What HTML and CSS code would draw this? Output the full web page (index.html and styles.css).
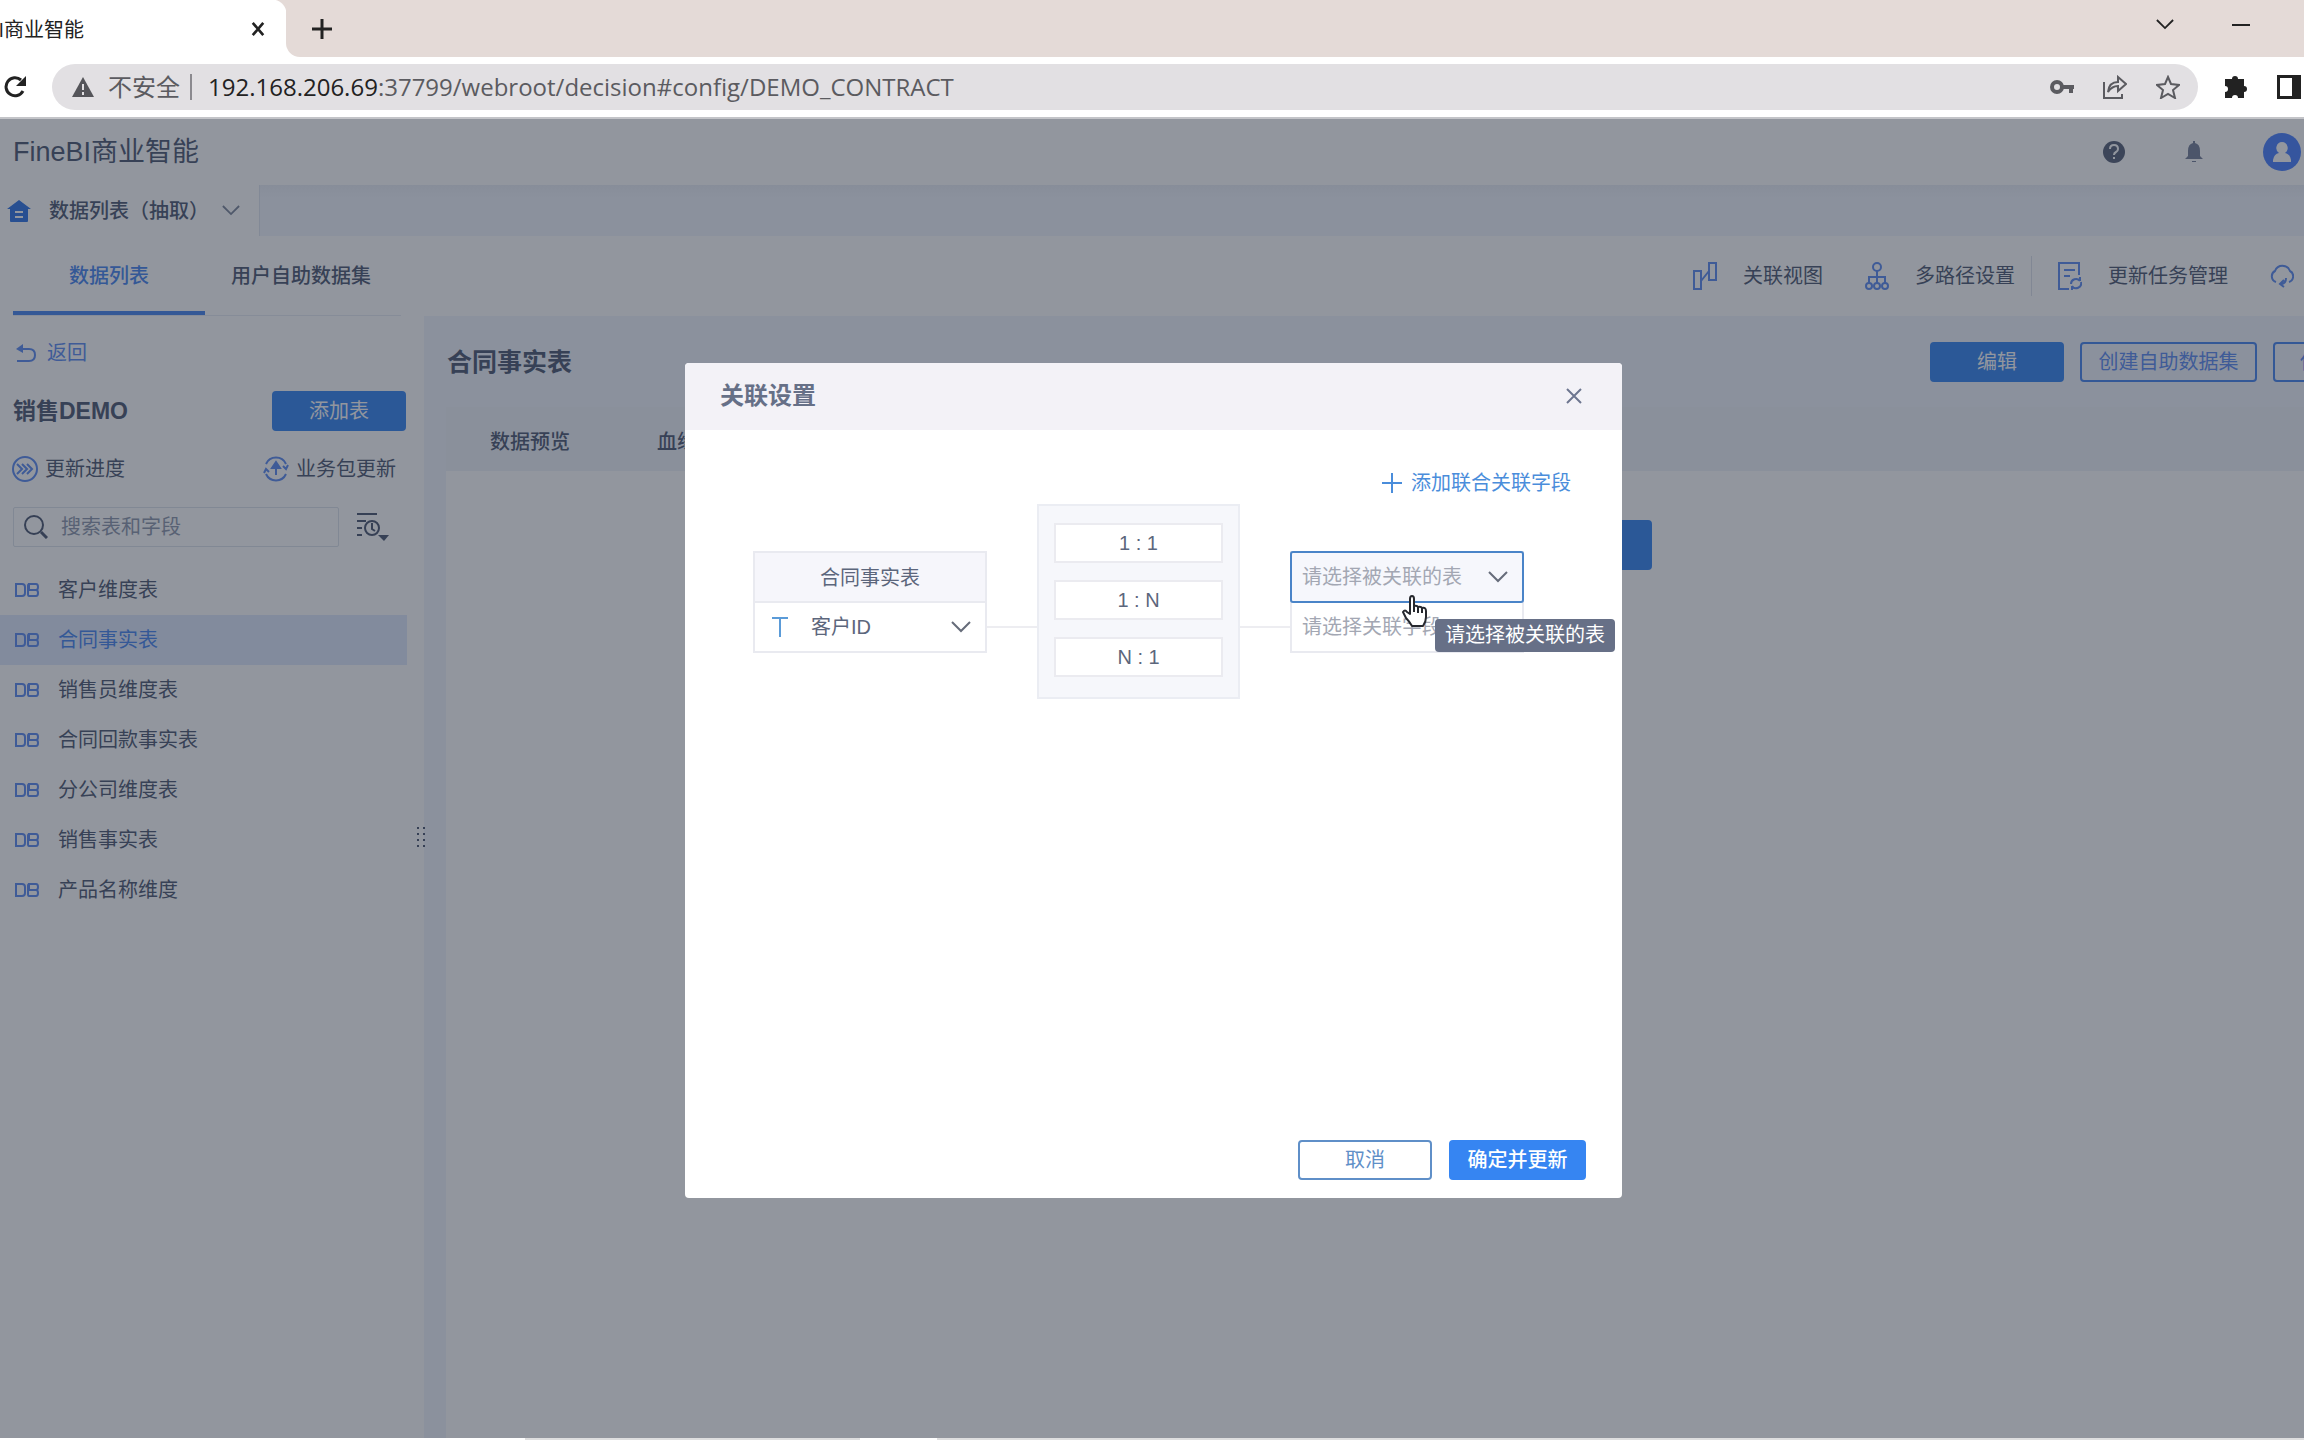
FILE: index.html
```html
<!DOCTYPE html>
<html lang="zh-CN">
<head>
<meta charset="utf-8">
<title>FineBI商业智能</title>
<link rel="stylesheet" href="styles.css">
</head>
<body>
<svg class="defs" width="0" height="0" aria-hidden="true">
  <symbol id="db" viewBox="0 0 24 14"><path d="M1 1h6q3 0 3 3v6q0 3-3 3H1zM14 1h7q2 0 2 3t-2 3h-7zM14 7h7q2 0 2 3t-2 3h-7q-1 0-1-2V3q0-2 1-2" fill="none" stroke="currentColor" stroke-width="2"/></symbol>
  <symbol id="chev" viewBox="0 0 20 12"><path d="M1 1l9 9 9-9" fill="none" stroke="currentColor" stroke-width="2"/></symbol>
  <symbol id="cross" viewBox="0 0 16 16"><path d="M1 1l14 14M15 1L1 15" fill="none" stroke="currentColor" stroke-width="2"/></symbol>
  <symbol id="plus" viewBox="0 0 20 20"><path d="M10 0v20M0 10h20" fill="none" stroke="currentColor" stroke-width="2"/></symbol>
</svg>

<header class="chrome">
  <div class="tabstrip">
    <div class="browser-tab">
      <div class="tab-title"><span>FineBI商业智能</span></div>
      <button class="icon-btn tab-close" aria-label="关闭标签页"><svg width="14" height="14" viewBox="0 0 16 16"><path d="M2 1l12 14M14 1L2 15" fill="none" stroke="currentColor" stroke-width="3"/></svg></button>
    </div>
    <div class="strip-rest">
      <button class="icon-btn" aria-label="新标签页"><svg width="20" height="20" viewBox="0 0 20 20"><path d="M10 0v20M0 10h20" fill="none" stroke="currentColor" stroke-width="3"/></svg></button>
      <div class="window-controls">
        <button class="icon-btn" aria-label="搜索标签页"><svg width="18" height="11"><use href="#chev"/></svg></button>
        <button class="icon-btn" aria-label="最小化"><svg width="18" height="10" viewBox="0 0 18 10"><path d="M0 5h18" stroke="currentColor" stroke-width="2"/></svg></button>
      </div>
    </div>
  </div>
  <div class="toolbar">
    <button class="icon-btn" aria-label="重新加载"><svg width="24" height="24" viewBox="0 0 24 24"><path d="M19 16a9 9 0 1 1-2-11" fill="none" stroke="currentColor" stroke-width="3"/><path d="M22 1v10h-10z" fill="currentColor"/></svg></button>
    <div class="omnibox">
      <svg width="22" height="20" viewBox="0 0 22 20"><path d="M11 0L22 20H0z" fill="#55555a"/><path d="M11 7v6M11 15v3" stroke="#e2e0e3" stroke-width="2"/></svg>
      <span class="insecure">不安全</span>
      <span class="omni-sep"></span>
      <span class="url"><b>192.168.206.69</b>:37799/webroot/decision#config/DEMO_CONTRACT</span>
      <div class="omni-icons">
        <svg width="24" height="24" viewBox="0 0 24 24"><circle cx="7" cy="12" r="5" fill="none" stroke="currentColor" stroke-width="4"/><path d="M12 10h12v4h-1v4h-4v-4h-7z" fill="currentColor"/></svg>
        <svg width="24" height="24" viewBox="0 0 24 24" fill="none" stroke="currentColor" stroke-width="2"><path d="M1 7v16h18v-4"/><path d="M5 17Q6 7 15 7V2l8 7-8 7v-5Q9 11 5 17z"/></svg>
        <svg width="24" height="24" viewBox="0 0 24 24"><path d="M12 2l3 7 8 1-6 5 2 8-7-4-7 4 2-8-6-5 8-1z" fill="none" stroke="currentColor" stroke-width="2"/></svg>
      </div>
    </div>
    <div class="ext-icons">
      <svg width="24" height="24" viewBox="0 0 24 24"><path d="M1 4h7a3 3 0 1 1 6 0h6v7a3 3 0 1 1 0 6v6h-6a3 3 0 1 0-6 0H1v-6a3 3 0 1 0 0-6z" fill="currentColor"/></svg>
      <svg width="24" height="24" viewBox="0 0 24 24"><path d="M0 0h24v24H0zM3 3v18h12V3z" fill="currentColor" fill-rule="evenodd"/></svg>
    </div>
  </div>
</header>

<div class="app">
  <header class="app-head">
    <div class="brand">FineBI商业智能</div>
    <div class="head-icons">
      <svg width="22" height="22" viewBox="0 0 22 22"><circle cx="11" cy="11" r="11" fill="#576178"/><path d="M7 8q0-4 4-4t4 4q0 2-2 3t-2 3M11 16v2" fill="none" stroke="#fff" stroke-width="2"/></svg>
      <svg width="18" height="22" viewBox="0 0 18 22"><path d="M8 0h2v2q5 1 5 8v5l3 3H0l3-3v-5q0-7 5-8zM7 20h4v1H7z" fill="#76809a"/></svg>
      <svg width="38" height="38" viewBox="0 0 38 38"><circle cx="19" cy="19" r="19" fill="#4a80ff"/><path d="M19 9a6 6 0 0 1 3 11q5 1 6 7v2H10v-2q1-6 6-7a6 6 0 0 1 3-11z" fill="#fff"/></svg>
    </div>
  </header>

  <div class="page-tabs">
    <div class="page-tab">
      <svg width="24" height="22" viewBox="0 0 24 22"><path d="M12 0l12 9h-3v12q0 1-1 1H4q-1 0-1-1V9H0zM8 11v2h8v-2zM8 16v2h8v-2z" fill="#2f74e6" fill-rule="evenodd"/></svg>
      <span>数据列表（抽取）</span>
      <svg class="muted" width="18" height="11"><use href="#chev"/></svg>
    </div>
  </div>

  <nav class="section-nav">
    <div class="section-tabs">
      <a class="section-tab active" href="#list">数据列表</a>
      <a class="section-tab" href="#self">用户自助数据集</a>
    </div>
    <div class="nav-tools">
      <a class="tool" href="#view"><svg width="24" height="28" viewBox="0 0 24 28"><path d="M1 9h7v18H1zM16 1h7v17h-7zM8 19l8-10"/></svg>关联视图</a>
      <a class="tool" href="#path"><svg width="24" height="28" viewBox="0 0 24 28"><circle cx="12" cy="5" r="4"/><circle cx="4" cy="24" r="3"/><circle cx="12" cy="24" r="3"/><circle cx="20" cy="24" r="3"/><path d="M12 9v12M4 21v-6h16v6"/></svg>多路径设置</a>
      <a class="tool divided" href="#task"><svg width="24" height="28" viewBox="0 0 24 28"><path d="M11 27H1V1h20v12M6 8h11M6 14h6"/><path d="M13 22a5 5 0 0 1 9-3M23 20a5 5 0 0 1-9 4M22 15v4M14 28v-4"/></svg>更新任务管理</a>
      <a class="tool" href="#cloud" aria-label="云更新"><svg width="24" height="28" viewBox="0 0 24 28"><path d="M6 20a6 6 0 0 1-1-11 8 8 0 0 1 15 0 6 6 0 0 1-1 11M11 22q5 0 5-6M14 18l-4 4 4 3"/></svg></a>
    </div>
  </nav>

  <div class="workspace">
    <aside class="sidebar">
      <a class="back" href="#back"><svg width="20" height="18" viewBox="0 0 20 18"><path d="M5 5h8q6 0 6 6t-6 6H1" fill="none" stroke="currentColor" stroke-width="2"/><path d="M0 5l7-5v9z" fill="currentColor"/></svg>返回</a>
      <div class="pack-row">
        <h2>销售DEMO</h2>
        <button class="btn primary">添加表</button>
      </div>
      <div class="update-row">
        <a href="#progress"><svg width="26" height="26" viewBox="0 0 26 26"><circle cx="13" cy="13" r="12"/><path d="M5 8l5 5-5 5M10 8l5 5-5 5M15 8l5 5-5 5"/></svg>更新进度</a>
        <a href="#pack"><svg width="26" height="26" viewBox="0 0 26 26"><path d="M3 8A11 11 0 0 1 23 8M23 18A11 11 0 0 1 3 18M1 17l2-4 3 3M25 9l-2 4-3-3"/><path d="M13 19V9"/><path class="solid" d="M13 6l4 6H9z"/></svg>业务包更新</a>
      </div>
      <div class="search-row">
        <label class="search"><svg width="24" height="24" viewBox="0 0 24 24"><path d="M17 17l6 6" stroke="#4b5771" stroke-width="3"/><circle cx="10" cy="10" r="9" fill="none" stroke="#4b5771" stroke-width="2"/></svg><input type="text" placeholder="搜索表和字段" aria-label="搜索表和字段"></label>
        <button class="icon-btn sort" aria-label="排序"><svg width="34" height="30" viewBox="0 0 34 30" fill="none" stroke="currentColor" stroke-width="2"><path d="M1 2h20M1 9h9M1 16h5M1 23h5"/><circle cx="16" cy="16" r="7"/><path d="M16 11v6l3 2"/><path d="M22 23h11l-5 6z" fill="currentColor" stroke="none"/></svg></button>
      </div>
      <ul class="table-list">
        <li><a href="#t1"><svg width="24" height="14"><use href="#db"/></svg>客户维度表</a></li>
        <li><a class="selected" href="#t2"><svg width="24" height="14"><use href="#db"/></svg>合同事实表</a></li>
        <li><a href="#t3"><svg width="24" height="14"><use href="#db"/></svg>销售员维度表</a></li>
        <li><a href="#t4"><svg width="24" height="14"><use href="#db"/></svg>合同回款事实表</a></li>
        <li><a href="#t5"><svg width="24" height="14"><use href="#db"/></svg>分公司维度表</a></li>
        <li><a href="#t6"><svg width="24" height="14"><use href="#db"/></svg>销售事实表</a></li>
        <li><a href="#t7"><svg width="24" height="14"><use href="#db"/></svg>产品名称维度</a></li>
      </ul>
      <svg class="grip" width="8" height="22" viewBox="0 0 8 22"><path d="M1 1v20M7 1v20" stroke="#4b5771" stroke-width="2" stroke-dasharray="2 4"/></svg>
    </aside>

    <main class="content">
      <div class="content-head">
        <h1>合同事实表</h1>
        <div class="actions">
          <button class="btn primary">编辑</button>
          <button class="btn outline">创建自助数据集</button>
          <button class="btn outline">使用组件</button>
        </div>
      </div>
      <div class="panel">
        <div class="panel-tabs"><a href="#preview">数据预览</a><a href="#blood">血缘分析</a></div>
        <div class="panel-body"><button class="btn primary large">添加关联表</button></div>
      </div>
    </main>
  </div>

  <div class="backdrop">
    <section class="modal" role="dialog" aria-labelledby="dlg-title">
      <header class="modal-head">
        <h2 id="dlg-title">关联设置</h2>
        <button class="icon-btn" aria-label="关闭"><svg width="16" height="16"><use href="#cross"/></svg></button>
      </header>
      <div class="modal-body">
        <button class="add-field"><svg width="20" height="20"><use href="#plus"/></svg>添加联合关联字段</button>
        <div class="relation">
          <div class="pair">
            <div class="pair-head">合同事实表</div>
            <div class="field typed">
              <svg class="type" width="16" height="20" viewBox="0 0 16 20"><path d="M0 1h16M8 1v19" fill="none" stroke="#5b9bd8" stroke-width="2"/></svg>
              <select aria-label="关联字段"><option>客户ID</option></select>
              <svg class="arrow" width="20" height="12"><use href="#chev"/></svg>
            </div>
          </div>
          <span class="link-line"></span>
          <div class="kinds">
            <button>1 : 1</button>
            <button>1 : N</button>
            <button>N : 1</button>
          </div>
          <span class="link-line"></span>
          <div class="pair">
            <div class="field focused">
              <select aria-label="被关联的表"><option>请选择被关联的表</option></select>
              <svg class="arrow" width="20" height="12"><use href="#chev"/></svg>
            </div>
            <div class="field">
              <select aria-label="被关联字段"><option>请选择关联字段</option></select>
            </div>
            <div class="tooltip" role="tooltip">请选择被关联的表</div>
            <svg class="cursor" width="26" height="34" viewBox="0 0 26 34"><path d="M8 19V4q0-3 2-3t2 3v7q3-1 4 1 3-1 4 1 4-1 4 3v6q0 5-3 9H10q-3-5-6-8l-3-6q2-3 4 0z" fill="#fff" stroke="#26282e" stroke-width="2" stroke-linejoin="round"/><path d="M12 10v7M16 12v6M20 13v5" stroke="#26282e" stroke-width="2"/></svg>
          </div>
        </div>
      </div>
      <footer class="modal-foot">
        <button class="btn outline">取消</button>
        <button class="btn primary">确定并更新</button>
      </footer>
    </section>
  </div>
</div>

<footer class="taskbar"><span class="task-a"></span><span class="task-b"></span><span class="task-c"></span></footer>
</body>
</html>
```
FILE: styles.css
```css
* { box-sizing: border-box; }

body {
  margin: 0;
  min-height: 100vh;
  display: flex;
  flex-direction: column;
  overflow: hidden;
  background: #fff;
  color: #4e5972;
  font: 20px/28px "Liberation Sans", "Noto Sans CJK SC", sans-serif;
}

.defs { position: absolute; }
svg { flex: none; display: block; }
a { color: inherit; text-decoration: none; }
h1, h2 { margin: 0; }
button, input, select { font: inherit; color: inherit; }
button { white-space: nowrap; }

.icon-btn {
  display: flex;
  padding: 0;
  border: 0;
  background: none;
}

/* Browser frame */
.chrome { color: #222; font-family: "Open Sans", "Noto Sans CJK SC", sans-serif; }
.tabstrip { display: flex; height: 57px; background: #fff; }
.browser-tab {
  width: 286px;
  display: flex;
  align-items: center;
  background: radial-gradient(circle at 0 100%, #fff 14px, #e4dad7 15px) top right / 14px 14px no-repeat #fff;
}
.tab-title { width: 84px; display: flex; justify-content: flex-end; overflow: hidden; padding-top: 2px; white-space: nowrap; }
.tab-close { margin-left: 167px; }
.strip-rest {
  flex: 1;
  display: flex;
  align-items: center;
  justify-content: space-between;
  padding: 0 54px 0 26px;
  border-bottom-left-radius: 14px;
  background: #e4dad7;
}
.window-controls { display: flex; align-items: center; gap: 58px; padding-bottom: 8px; }
.toolbar { display: flex; align-items: center; height: 62px; padding: 0 3px 1px 4px; border-bottom: 2px solid #c3c4c8; }
.omnibox {
  flex: 1;
  display: flex;
  align-items: center;
  height: 46px;
  margin-left: 24px;
  padding: 0 18px 0 20px;
  border-radius: 23px;
  background: #e2e0e3;
  color: #5b5b60;
}
.insecure { margin-left: 14px; font-size: 24px; }
.omni-sep { width: 2px; height: 26px; margin: 0 16px 0 10px; background: #8b8a8f; }
.url { font-size: 24px; }
.url b { font-weight: 400; color: #222; }
.omni-icons { display: flex; gap: 29px; margin-left: auto; }
.ext-icons { display: flex; gap: 29px; margin-left: 26px; }

/* Application */
.app { position: relative; flex: 1; display: flex; flex-direction: column; }
.app-head { display: flex; align-items: center; justify-content: space-between; height: 66px; padding: 0 3px 0 13px; }
.brand { font-size: 27px; }
.head-icons { display: flex; align-items: center; gap: 60px; }
.page-tabs { height: 51px; background: linear-gradient(#eaeef6, #f1f5fd 12px); }
.page-tab {
  display: flex;
  align-items: center;
  width: 260px;
  height: 51px;
  padding-left: 7px;
  border-right: 1px solid #dfe5ef;
  background: #fff;
  font-weight: 500;
}
.page-tab span { width: 173px; margin-left: 18px; white-space: nowrap; }
.muted { color: #7c869a; }

.section-nav { display: flex; justify-content: space-between; height: 80px; }
.section-tabs { display: flex; margin-left: 13px; width: 388px; border-bottom: 1px solid #e8ecf4; font-weight: 500; }
.section-tab { display: flex; align-items: center; justify-content: center; width: 192px; padding-top: 4px; border-bottom: 4px solid transparent; }
.section-tab.active { color: #4886f0; border-color: #4886f0; }
.nav-tools { display: flex; align-items: center; gap: 42px; padding-right: 10px; }
.tool { display: flex; align-items: center; gap: 26px; height: 40px; white-space: nowrap; }
.tool svg, .update-row svg { fill: none; stroke: #5c8cf2; stroke-width: 2; }
.update-row .solid { fill: #5c8cf2; }
.tool.divided { padding-left: 26px; margin-left: -26px; border-left: 1px solid #dde2ec; }

.workspace { flex: 1; display: flex; }
.sidebar { position: relative; width: 424px; padding-top: 23px; }
.back { display: flex; align-items: center; gap: 11px; margin-left: 16px; color: #5c8cf2; }
.pack-row { display: flex; align-items: center; justify-content: space-between; margin: 24px 18px 0 13px; }
.pack-row h2 { font-size: 23px; }

.btn { height: 40px; border: 2px solid #4886f0; border-radius: 4px; padding: 0; min-width: 134px; }
.btn.primary { background: #3685f2; border-color: #3685f2; color: #fff; }
.btn.outline { background: #fff; color: #5c8cf2; }
.btn.large { height: 50px; padding: 0 28px; }

.update-row { display: flex; justify-content: space-between; margin: 24px 28px 0 12px; }
.update-row a { display: flex; align-items: center; gap: 7px; }
.search-row { display: flex; align-items: center; gap: 17px; margin: 24px 0 0 13px; }
.search { display: flex; align-items: center; gap: 13px; width: 326px; height: 40px; padding-left: 10px; border: 1px solid #dde3ec; border-radius: 2px; }
.search input { flex: 1; min-width: 0; padding: 0; border: 0; background: none; }
.search input::placeholder { color: #8e98ac; opacity: 1; }
.sort { color: #4b5771; }
.table-list { list-style: none; margin: 18px 17px 0 0; padding: 0; }
.table-list a { display: flex; align-items: center; gap: 19px; height: 50px; padding-left: 15px; }
.table-list svg { color: #5c8cf2; }
.table-list .selected { background: #dfe9fe; color: #4886f0; }
.grip { position: absolute; right: -1px; top: 510px; }

.content { flex: 1; min-width: 0; display: flex; flex-direction: column; padding-left: 22px; background: #f1f5fd; }
.content-head { display: flex; align-items: center; justify-content: space-between; height: 91px; padding-left: 1px; }
.content-head h1 { font-size: 25px; }
.actions { display: flex; gap: 16px; margin-right: -103px; }
.actions .outline { background: none; }
.actions .outline:nth-child(2) { width: 177px; }
.panel { flex: 1; display: flex; flex-direction: column; background: #fff; }
.panel-tabs { display: flex; align-items: center; gap: 87px; height: 64px; padding: 6px 0 0 44px; background: #eff3f9; font-weight: 500; }
.panel-body { padding: 49px 0 0 1046px; }

/* Dialog */
.backdrop {
  position: absolute;
  inset: 0;
  display: flex;
  align-items: center;
  justify-content: center;
  padding: 3px 0 0 3px;
  background: rgba(33, 41, 57, .49);
}
.modal {
  width: 937px;
  min-height: 835px;
  display: flex;
  flex-direction: column;
  border-radius: 4px;
  overflow: hidden;
  background: #fff;
}
.modal-head { display: flex; align-items: center; justify-content: space-between; height: 67px; padding: 0 40px 0 35px; background: #f3f2f7; color: #6d7690; }
.modal-head h2 { font-size: 24px; color: #667087; }
.modal-body { flex: 1; padding: 39px 51px 0 68px; color: #5c667c; }
.add-field { display: flex; align-items: center; gap: 9px; margin-left: auto; padding: 0; border: 0; background: none; color: #4a8ddb; }
.relation { display: flex; align-items: flex-start; padding: 7px 47px 0 0; }
.pair { position: relative; width: 234px; margin-top: 47px; border: 2px solid #e9eaf0; }
.pair-head { height: 50px; border-bottom: 2px solid #e9eaf0; background: #f6f6fb; text-align: center; line-height: 50px; }
.field { display: grid; align-items: center; height: 48px; }
.field > * { grid-area: 1 / 1; }
.field select { width: 100%; height: 46px; padding: 0 10px; border: 0; outline: 0; background: none; appearance: none; color: #a3a7b3; }
.field.typed select { padding-left: 56px; color: #5c667c; }
.type { margin-left: 17px; }
.arrow { justify-self: end; margin-right: 14px; color: #666c7a; pointer-events: none; }
.focused { height: 52px; margin: -2px -2px 0; border: 2px solid #4a84c8; border-radius: 3px; background: #f6f7fc; }
.link-line { flex: 1; height: 2px; margin-top: 122px; background: #ededf1; }
.kinds { display: flex; flex-direction: column; gap: 17px; width: 203px; height: 195px; padding: 17px 15px; border: 2px solid #ebedf3; background: #f6f7fb; }
.kinds button { height: 40px; border: 2px solid #ebebf0; background: #fff; padding: 0; }
.tooltip { position: absolute; left: 143px; top: 66px; height: 33px; padding: 0 10px; border-radius: 4px; background: #677087; color: #fff; line-height: 33px; white-space: nowrap; }
.cursor { position: absolute; left: 110px; top: 42px; }
.modal-foot { display: flex; justify-content: flex-end; gap: 17px; padding: 0 36px 18px; }
.modal-foot .outline { border-color: #5f8fc8; color: #5f8fc8; }
.modal-foot .primary { width: 137px; font-weight: 500; }

/* Strip of the window underneath */
.taskbar { display: flex; height: 2px; background: #dededf; }
.task-a { width: 525px; background: #fff; }
.task-b { width: 335px; }
.task-c { width: 77px; background: #fff; }
```
